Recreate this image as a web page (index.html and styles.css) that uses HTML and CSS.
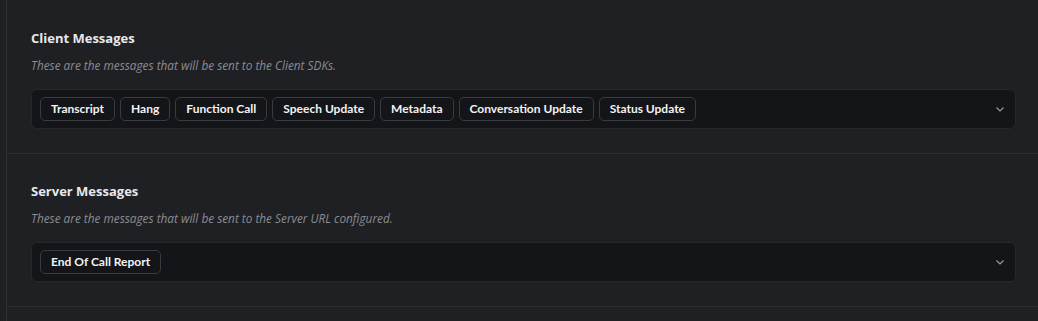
FILE: index.html
```html
<!DOCTYPE html>
<html lang="en">
<head>
  <meta charset="UTF-8">
  <title>Messaging</title>
  <link rel="stylesheet" href="styles.css">
</head>
<body>
  <div class="panel">
    <div class="section first">
      <h3>Client Messages</h3>
      <p class="hint">These are the messages that will be sent to the Client SDKs.</p>
      <div class="multi-select">
        <div class="tags">
          <span class="tag">Transcript</span>
          <span class="tag">Hang</span>
          <span class="tag">Function Call</span>
          <span class="tag">Speech Update</span>
          <span class="tag">Metadata</span>
          <span class="tag">Conversation Update</span>
          <span class="tag">Status Update</span>
        </div>
        <svg class="chevron" width="12" height="12" viewBox="0 0 12 12"><path d="M2.5 4.5 6 8l3.5-3.5" fill="none" stroke="#9a9ba0" stroke-width="1.2"/></svg>
      </div>
    </div>
    <div class="section">
      <h3>Server Messages</h3>
      <p class="hint">These are the messages that will be sent to the Server URL configured.</p>
      <div class="multi-select">
        <div class="tags">
          <span class="tag">End Of Call Report</span>
        </div>
        <svg class="chevron" width="12" height="12" viewBox="0 0 12 12"><path d="M2.5 4.5 6 8l3.5-3.5" fill="none" stroke="#9a9ba0" stroke-width="1.2"/></svg>
      </div>
    </div>
  </div>
</body>
</html>
```

FILE: styles.css
```css
body {
  margin: 0;
  background: #1f2024;
  font-family: "Open Sans", "Noto Sans", sans-serif;
  color: #ececee;
  height: 321px;
  overflow: hidden;
}
.panel {
  margin-left: 6px;
  border-left: 1px solid #2e2f33;
  min-height: 321px;
}
.section {
  padding: 28px 22px 24px 24px;
  border-bottom: 1px solid #2e2f33;
}
.section.first {
  padding-top: 29px;
}
.section h3 {
  margin: 0;
  font-size: 13px;
  line-height: 18px;
  font-weight: 700;
  color: #e8e8ea;
}
.hint {
  margin: 10px 0 0;
  font-size: 11.8px;
  line-height: 16px;
  font-style: italic;
  color: #8b8c91;
}
.multi-select {
  margin-top: 16px;
  background: #131518;
  border: 1px solid #26272b;
  border-radius: 6px;
  padding: 7px 9px 7px 8px;
  display: flex;
  align-items: center;
  justify-content: space-between;
}
.tags {
  display: flex;
  gap: 5px;
  flex-wrap: wrap;
}
.tag {
  font-family: Lato, "Open Sans", sans-serif;
  border: 1px solid #3a3b40;
  border-radius: 5px;
  padding: 0 10px;
  height: 22px;
  line-height: 22px;
  font-size: 12px;
  font-weight: 700;
  color: #f2f2f4;
}
.chevron {
  display: block;
}
```
